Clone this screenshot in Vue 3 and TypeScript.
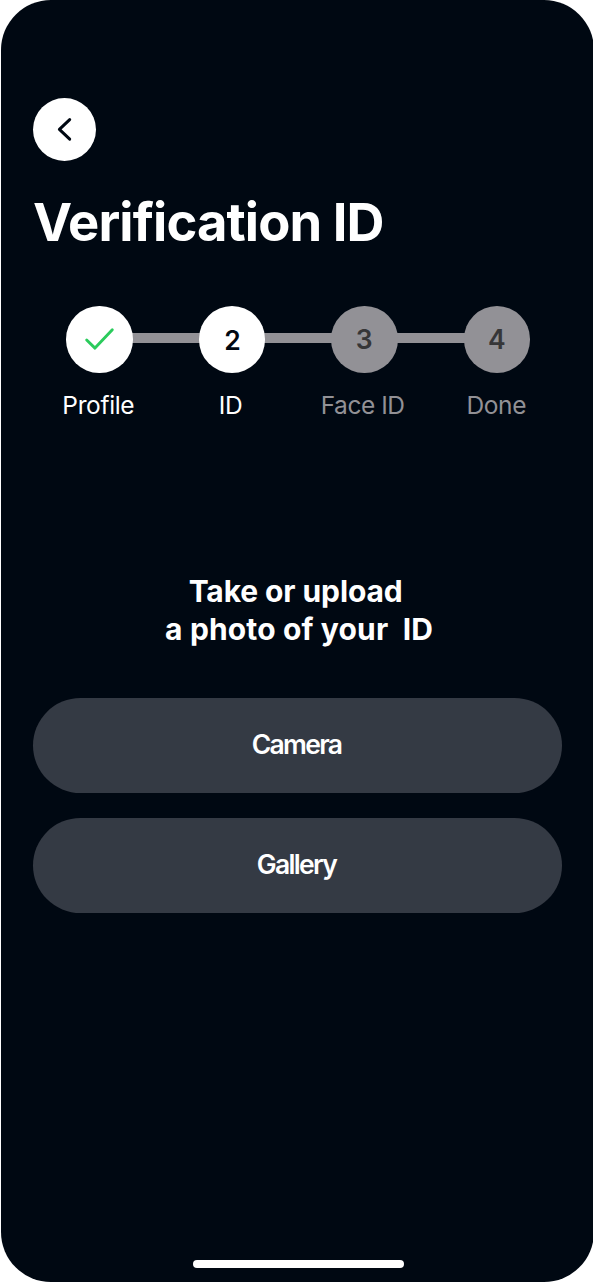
<script setup lang="ts">
interface Step {
  key: string
  label: string
  mark: string
  state: 'complete' | 'current' | 'pending'
}

const steps: Step[] = [
  { key: 'profile', label: 'Profile', mark: '', state: 'complete' },
  { key: 'id', label: 'ID', mark: '2', state: 'current' },
  { key: 'face', label: 'Face ID', mark: '3', state: 'pending' },
  { key: 'done', label: 'Done', mark: '4', state: 'pending' },
]

const sources: string[] = ['Camera', 'Gallery']
</script>

<template>
  <main class="screen">
    <button class="back" type="button" aria-label="Back">
      <svg width="63.4" height="63.4" viewBox="0 0 63.4 63.4" fill="none">
        <path d="M36.7 21.6 26.4 31.4l10.3 9.8" stroke="#000812" stroke-width="3" stroke-linecap="round" stroke-linejoin="round" />
      </svg>
    </button>

    <h1 class="title">Verification ID</h1>

    <ol class="steps">
      <li v-for="step in steps" :key="step.key" class="step" :class="[step.state, step.key]">
        <div class="disc">
          <svg v-if="step.state === 'complete'" width="66.4" height="66.4" viewBox="0 0 66.4 66.4" fill="none">
            <path d="m20.7 34 8.3 8.1 17.3-18.3" stroke="#2bcb5c" stroke-width="2.9" stroke-linecap="round" stroke-linejoin="round" />
          </svg>
          <span v-else class="mark">{{ step.mark }}</span>
        </div>
        <span class="label">{{ step.label }}</span>
      </li>
    </ol>

    <p class="prompt"><span class="line first">Take or upload</span><span class="line">a photo of your&nbsp; ID</span></p>

    <div class="actions">
      <button v-for="source in sources" :key="source" class="action" type="button">
        {{ source }}
      </button>
    </div>

    <div class="home-indicator"></div>
  </main>
</template>

<style>
html,
body {
  background: #fff;
  overflow: hidden;
}
</style>

<style scoped>
.screen {
  box-sizing: border-box;
  display: flex;
  flex-direction: column;
  width: 592.5px;
  height: 1282px;
  margin-left: 1.4px;
  padding: 97.7px 31.6px 14px;
  border-radius: 50px;
  background: #000812;
  color: #fff;
  font-family: Inter, 'Liberation Sans', sans-serif;
}

button {
  padding: 0;
  border: 0;
  font: inherit;
}

.back {
  width: 63.4px;
  height: 63.4px;
  border-radius: 50%;
  background: #fff;
}

.back svg,
.disc svg {
  display: block;
}

.title {
  height: 64px;
  margin: 29.4px 0 0;
  font-size: 52.5px;
  font-weight: 700;
  line-height: 64px;
  letter-spacing: -0.9px;
  white-space: nowrap;
}

.steps {
  display: flex;
  width: 530.6px;
  margin: 51.8px 0 0;
  padding: 0;
  list-style: none;
}

.step {
  position: relative;
  display: flex;
  flex: 1;
  flex-direction: column;
  align-items: center;
}

.step + .step::before {
  content: '';
  position: absolute;
  top: 26.8px;
  right: 50%;
  width: 100%;
  height: 9.6px;
  background: #929196;
}

.disc {
  position: relative;
  z-index: 1;
  display: flex;
  align-items: center;
  justify-content: center;
  width: 66.4px;
  height: 66.4px;
  border-radius: 50%;
  background: #fff;
}

.mark {
  padding: 2px 0 0 1px;
  color: #000812;
  font-size: 26.5px;
  font-weight: 600;
  line-height: 32px;
}

.pending .disc {
  background: #929196;
}

.pending .mark {
  padding: 0 1px 1px 0;
  color: #363638;
}

.label {
  margin-top: 17.5px;
  padding-right: 2px;
  font-size: 24.5px;
  line-height: 30px;
  letter-spacing: -0.35px;
  white-space: nowrap;
}

.id .label {
  padding-right: 3px;
}

.face .label {
  padding-right: 4px;
  letter-spacing: -0.45px;
}

.pending .label {
  color: #929196;
}

.prompt {
  margin: 151.5px 0 0;
  font-size: 30px;
  font-weight: 700;
  line-height: 38px;
  text-align: center;
}

.line {
  display: block;
  padding-left: 3px;
  letter-spacing: 0.15px;
}

.line.first {
  padding: 0 4px 0 0;
  letter-spacing: -0.1px;
}

.actions {
  display: flex;
  flex-direction: column;
  gap: 25px;
  margin-top: 50.2px;
}

.action {
  width: 529px;
  height: 95px;
  padding: 0 2px 3px 0;
  border-radius: 47.5px;
  background: #343a44;
  color: #fff;
  font-size: 26.5px;
  font-weight: 600;
  letter-spacing: -1.7px;
}

.home-indicator {
  align-self: center;
  width: 211.6px;
  height: 8.2px;
  margin: auto 0 0 1.4px;
  border-radius: 5px;
  background: #fff;
}
</style>
